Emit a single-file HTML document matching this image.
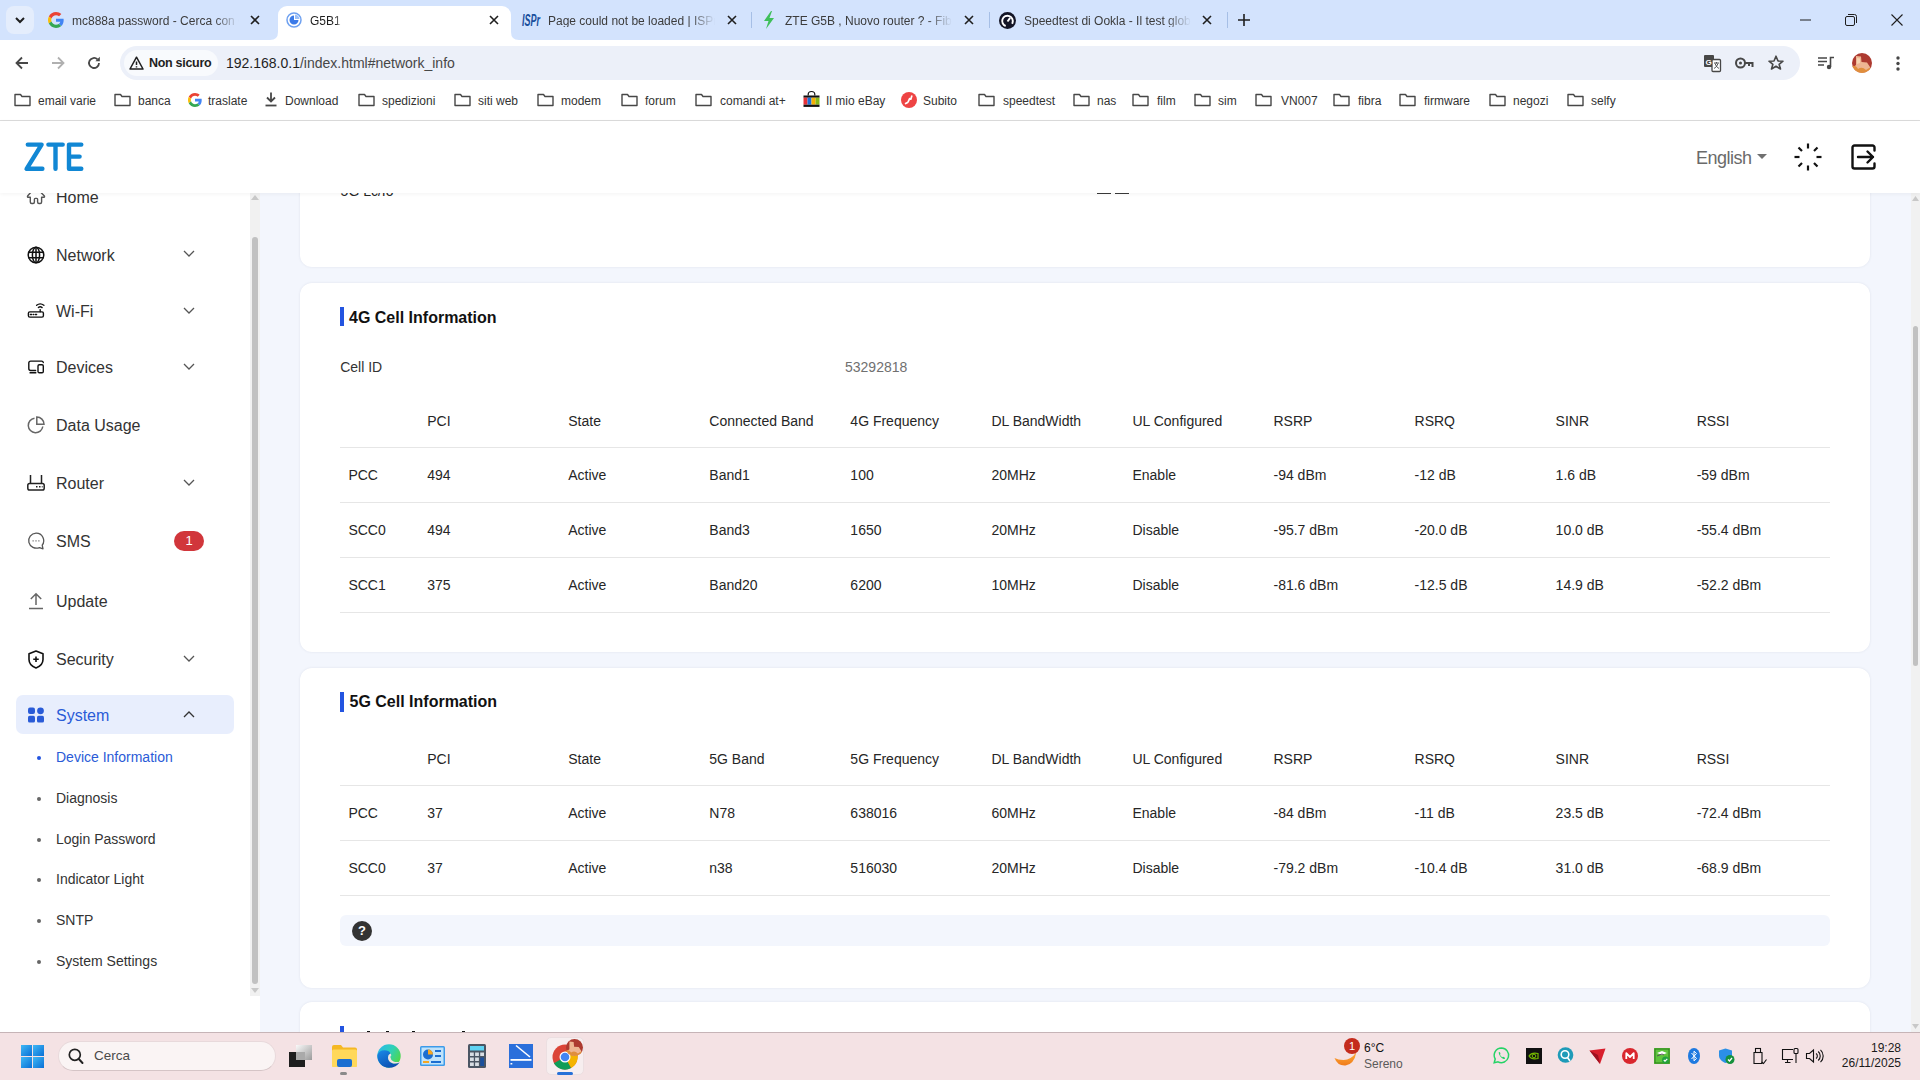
<!DOCTYPE html>
<html><head><meta charset="utf-8">
<style>
*{margin:0;padding:0;box-sizing:border-box}
html,body{width:1920px;height:1080px;overflow:hidden;font-family:"Liberation Sans",sans-serif;background:#fff;position:relative}
.a{position:absolute}
.t{position:absolute;white-space:nowrap;line-height:1}
svg{position:absolute;overflow:visible}
/* chrome */
#tabstrip{left:0;top:0;width:1920px;height:40px;background:#d3e3fd}
#toolbar{left:0;top:40px;width:1920px;height:44px;background:#fff;border-radius:8px 8px 0 0}
#bm{left:0;top:84px;width:1920px;height:36px;background:#fff}
#bmline{left:0;top:120px;width:1920px;height:1px;background:#dcdcdc}
.tabtxt{font-size:12px;color:#3c3c3c;top:15px;overflow:hidden;-webkit-mask-image:linear-gradient(90deg,#000 85%,transparent)}
.tabfade{position:absolute;top:8px;width:24px;height:24px;background:linear-gradient(90deg,rgba(211,227,253,0),#d3e3fd)}
.sep{position:absolute;top:12px;width:1px;height:16px;background:#a6bfe6}
.bmt{font-size:12px;color:#333;top:94.5px}
/* app */
#hdr{left:0;top:121px;width:1920px;height:72px;background:#fff;box-shadow:0 1px 4px rgba(0,0,0,0.05);z-index:5}
#side{left:0;top:193px;width:260px;height:839px;background:#fff}
#sscroll{left:250px;top:193px;width:10px;height:803px;background:#f1f1f1}
#content{left:260px;top:193px;width:1651px;height:839px;background:#f3f6fd;overflow:hidden}
#rscroll{left:1911px;top:193px;width:9px;height:839px;background:#f1f1f1}
.card{position:absolute;left:40px;width:1570px;background:#fff;border-radius:12px;box-shadow:0 0 2.5px rgba(40,50,90,0.10)}
.nav{font-size:16px;color:#333}
.sub{font-size:14px;color:#333}
.cell{font-size:14px;color:#262626}
.hline{position:absolute;left:80px;width:1490px;height:1px;background:#e6e6e6}
/* taskbar */
#task{left:0;top:1032px;width:1920px;height:48px;background:#f4e2e4;border-top:1px solid #c6b4b7}
</style></head><body>

<!-- ============ TAB STRIP ============ -->
<div id="tabstrip" class="a"></div>
<div class="a" style="left:6px;top:6px;width:28px;height:28px;border-radius:8px;background:#e4edfc"></div>
<svg style="left:14px;top:15px" width="12" height="10"><path d="M2 3 L6 7 L10 3" fill="none" stroke="#1f1f1f" stroke-width="2"/></svg>

<!-- tab1 -->
<svg style="left:48px;top:12px" width="16" height="16" viewBox="0 0 48 48"><path fill="#EA4335" d="M24 9.5c3.54 0 6.71 1.22 9.21 3.6l6.85-6.85C35.9 2.38 30.47 0 24 0 14.62 0 6.51 5.38 2.56 13.22l7.98 6.19C12.43 13.72 17.74 9.5 24 9.5z"/><path fill="#4285F4" d="M46.98 24.55c0-1.57-.15-3.09-.38-4.55H24v9.02h12.94c-.58 2.96-2.26 5.48-4.78 7.18l7.73 6c4.51-4.18 7.09-10.36 7.09-17.65z"/><path fill="#FBBC05" d="M10.53 28.59c-.48-1.45-.76-2.99-.76-4.59s.27-3.14.76-4.59l-7.98-6.19C.92 16.46 0 20.12 0 24c0 3.88.92 7.54 2.56 10.78l7.97-6.19z"/><path fill="#34A853" d="M24 48c6.48 0 11.93-2.13 15.89-5.81l-7.73-6c-2.15 1.45-4.92 2.3-8.16 2.3-6.26 0-11.57-4.22-13.47-9.91l-7.98 6.19C6.51 42.62 14.62 48 24 48z"/></svg>
<div class="t tabtxt" style="left:72px;width:167px">mc888a password - Cerca con G</div>
<svg style="left:250px;top:15px" width="10" height="10"><path d="M1 1L9 9M9 1L1 9" stroke="#1f1f1f" stroke-width="1.6"/></svg>

<!-- tab2 active -->
<div class="a" style="left:278px;top:6px;width:233px;height:34px;background:#fff;border-radius:9px 9px 0 0"></div>
<svg style="left:270px;top:32px" width="8" height="8"><path d="M0 8 Q8 8 8 0 L8 8 Z" fill="#fff"/></svg>
<svg style="left:511px;top:32px" width="8" height="8"><path d="M8 8 Q0 8 0 0 L0 8 Z" fill="#fff"/></svg>
<svg style="left:286px;top:12px" width="16" height="16" viewBox="0 0 16 16"><circle cx="8" cy="8" r="7" fill="none" stroke="#6fa1f0" stroke-width="1.5"/><path d="M8 3.5 A4.5 4.5 0 1 0 12.5 8 L8 8 Z" fill="#3b7ae8"/><path d="M9 2.5 A5.5 5.5 0 0 1 13.5 7 L9 7 Z" fill="#9cc0f7"/></svg>
<div class="t tabtxt" style="left:310px;color:#1f1f1f">G5B1</div>
<svg style="left:489px;top:15px" width="10" height="10"><path d="M1 1L9 9M9 1L1 9" stroke="#1f1f1f" stroke-width="1.6"/></svg>

<!-- tab3 -->
<svg style="left:522px;top:11px" width="19" height="18" viewBox="0 0 19 18"><text x="0" y="15" font-family="Liberation Sans" font-style="italic" font-weight="bold" font-size="16" fill="#1a4f9c" textLength="18" lengthAdjust="spacingAndGlyphs">ISPr</text></svg>
<div class="t tabtxt" style="left:548px;width:167px">Page could not be loaded | ISPr</div>
<svg style="left:727px;top:15px" width="10" height="10"><path d="M1 1L9 9M9 1L1 9" stroke="#1f1f1f" stroke-width="1.6"/></svg>
<div class="sep" style="left:751px"></div>

<!-- tab4 -->
<svg style="left:762px;top:11px" width="14" height="18" viewBox="0 0 14 18"><path d="M9 0 L2 10 L6.5 10 L4 18 L12 7 L7.5 7 L10 0 Z" fill="#3fbf5a"/></svg>
<div class="t tabtxt" style="left:785px;width:167px">ZTE G5B , Nuovo router ? - Fibra</div>
<svg style="left:964px;top:15px" width="10" height="10"><path d="M1 1L9 9M9 1L1 9" stroke="#1f1f1f" stroke-width="1.6"/></svg>
<div class="sep" style="left:989px"></div>

<!-- tab5 -->
<svg style="left:999px;top:12px" width="17" height="17" viewBox="0 0 16 16"><circle cx="8" cy="8" r="8" fill="#141526"/><circle cx="8" cy="8.5" r="5" fill="none" stroke="#fff" stroke-width="1.8" stroke-dasharray="24 8" transform="rotate(110 8 8.5)"/><path d="M8 9 L10.5 5.5" stroke="#fff" stroke-width="1.8"/></svg>
<div class="t tabtxt" style="left:1024px;width:167px">Speedtest di Ookla - Il test globale</div>
<svg style="left:1202px;top:15px" width="10" height="10"><path d="M1 1L9 9M9 1L1 9" stroke="#1f1f1f" stroke-width="1.6"/></svg>
<div class="sep" style="left:1227px"></div>
<svg style="left:1238px;top:14px" width="12" height="12"><path d="M6 0V12M0 6H12" stroke="#1f1f1f" stroke-width="1.6"/></svg>

<!-- window controls -->
<svg style="left:1800px;top:19px" width="11" height="2"><path d="M0 1H11" stroke="#1f1f1f" stroke-width="1"/></svg>
<svg style="left:1845px;top:14px" width="12" height="12"><rect x="0.5" y="2.5" width="9" height="9" rx="1.5" fill="none" stroke="#1f1f1f"/><path d="M3 0.5H9.5A2 2 0 0 1 11.5 2.5V9" fill="none" stroke="#1f1f1f"/></svg>
<svg style="left:1891px;top:14px" width="12" height="12"><path d="M0.5 0.5L11.5 11.5M11.5 0.5L0.5 11.5" stroke="#1f1f1f" stroke-width="1.1"/></svg>

<!-- ============ TOOLBAR ============ -->
<div id="toolbar" class="a"></div>
<svg style="left:15px;top:56px" width="14" height="14" viewBox="0 0 14 14"><path d="M13 7H2M7 1.5L1.5 7L7 12.5" fill="none" stroke="#474747" stroke-width="1.8"/></svg>
<svg style="left:51px;top:56px" width="14" height="14" viewBox="0 0 14 14"><path d="M1 7H12M7 1.5L12.5 7L7 12.5" fill="none" stroke="#b0b0b0" stroke-width="1.8"/></svg>
<svg style="left:87px;top:56px" width="14" height="14" viewBox="0 0 14 14"><path d="M12 7A5 5 0 1 1 10.5 3.4" fill="none" stroke="#474747" stroke-width="1.8"/><path d="M12.8 0.8V5.2H8.4Z" fill="#474747"/></svg>
<div class="a" style="left:120px;top:46px;width:1680px;height:34px;border-radius:17px;background:#ecf0f9"></div>
<div class="a" style="left:124px;top:50px;width:94px;height:26px;border-radius:13px;background:#f8fafd"></div>
<svg style="left:129px;top:56px" width="15" height="14" viewBox="0 0 15 14"><path d="M7.5 1.2L14 13H1Z" fill="none" stroke="#1f1f1f" stroke-width="1.5" stroke-linejoin="round"/><path d="M7.5 5.5V9M7.5 10.3V11.5" stroke="#1f1f1f" stroke-width="1.5"/></svg>
<div class="t" style="left:149px;top:57px;font-size:12.5px;font-weight:bold;color:#1f1f1f;letter-spacing:-0.3px">Non sicuro</div>
<div class="t" style="left:226px;top:56px;font-size:14px;color:#1f1f1f">192.168.0.1<span style="color:#474747">/index.html#network_info</span></div>
<!-- right icons -->
<svg style="left:1704px;top:55px" width="17" height="17" viewBox="0 0 17 17"><rect x="0" y="0" width="10" height="12" rx="1" fill="#474747"/><rect x="8" y="4.5" width="8.5" height="12" rx="1" fill="#fff" stroke="#474747" stroke-width="1.3"/><text x="1.5" y="9.5" font-size="8" font-weight="bold" fill="#fff" font-family="Liberation Sans">G</text><path d="M10 8H15M12.5 7V8.5M11 8.5Q12 12 15 13.5M14 8.5Q13 12 10 13.5" fill="none" stroke="#474747" stroke-width="0.9"/></svg>
<svg style="left:1735px;top:57px" width="19" height="12" viewBox="0 0 19 12"><circle cx="5.5" cy="6" r="4.5" fill="none" stroke="#474747" stroke-width="2"/><circle cx="5.5" cy="6" r="1.5" fill="#474747"/><path d="M10 6H17.5V10M14 6V9" fill="none" stroke="#474747" stroke-width="2"/></svg>
<svg style="left:1768px;top:55px" width="16" height="15" viewBox="0 0 16 15"><path d="M8 1.2L10 6L15 6.2L11.1 9.3L12.5 14L8 11.3L3.5 14L4.9 9.3L1 6.2L6 6Z" fill="none" stroke="#474747" stroke-width="1.6" stroke-linejoin="round"/></svg>
<svg style="left:1818px;top:56px" width="17" height="14" viewBox="0 0 17 14"><path d="M0 2H9M0 5.5H9M0 9H6" stroke="#474747" stroke-width="1.6"/><path d="M12.5 11V1.5H16" fill="none" stroke="#474747" stroke-width="1.6"/><circle cx="11" cy="11" r="2.2" fill="#474747"/></svg>
<svg style="left:1852px;top:53px" width="20" height="20" viewBox="0 0 20 20"><defs><clipPath id="av"><circle cx="10" cy="10" r="10"/></clipPath></defs><g clip-path="url(#av)"><rect width="20" height="20" fill="#ad3a30"/><path d="M4 3L9 3.5L9.5 9L15 9.5L18 14L17 20H3L1.5 14L4 12Z" fill="#eeb592"/><path d="M0 13Q4 12 6 16Q10 13 14 17Q18 14 20 15V20H0Z" fill="#e08e3c"/><path d="M5 5L8 5.5L8 10L5 11Z" fill="#f6d4b0"/></g></svg>
<svg style="left:1896px;top:56px" width="4" height="15"><circle cx="2" cy="2" r="1.7" fill="#474747"/><circle cx="2" cy="7.5" r="1.7" fill="#474747"/><circle cx="2" cy="13" r="1.7" fill="#474747"/></svg>

<!-- ============ BOOKMARKS ============ -->
<div id="bm" class="a"></div>
<div id="bmline" class="a"></div>
<svg style="left:14px;top:93px" width="17" height="14" viewBox="0 0 17 14"><path d="M1 1.5V12.5H16V3.5H8L6.5 1.5Z" fill="none" stroke="#474747" stroke-width="1.4" stroke-linejoin="round"/></svg>
<div class="t bmt" style="left:38px">email varie</div>
<svg style="left:114px;top:93px" width="17" height="14" viewBox="0 0 17 14"><path d="M1 1.5V12.5H16V3.5H8L6.5 1.5Z" fill="none" stroke="#474747" stroke-width="1.4" stroke-linejoin="round"/></svg>
<div class="t bmt" style="left:138px">banca</div>
<svg style="left:188px;top:93px" width="14" height="14" viewBox="0 0 48 48"><path fill="#EA4335" d="M24 9.5c3.54 0 6.71 1.22 9.21 3.6l6.85-6.850C35.9 2.38 30.47 0 24 0 14.62 0 6.51 5.38 2.56 13.22l7.98 6.19C12.43 13.72 17.74 9.5 24 9.5z"/><path fill="#4285F4" d="M46.98 24.55c0-1.57-.15-3.09-.38-4.55H24v9.02h12.94c-.58 2.96-2.26 5.480-4.78 7.18l7.73 6c4.51-4.18 7.09-10.36 7.09-17.65z"/><path fill="#FBBC05" d="M10.53 28.59c-.48-1.45-.76-2.99-.76-4.59s.27-3.14.76-4.59l-7.98-6.19C.92 16.46 0 20.12 0 24c0 3.88.92 7.54 2.56 10.78l7.97-6.19z"/><path fill="#34A853" d="M24 48c6.48 0 11.93-2.13 15.89-5.81l-7.73-6c-2.15 1.45-4.92 2.3-8.16 2.3-6.26 0-11.57-4.22-13.47-9.91l-7.98 6.19C6.51 42.62 14.62 48 24 48z"/></svg>
<div class="t bmt" style="left:208px">traslate</div>
<svg style="left:265px;top:92px" width="12" height="15" viewBox="0 0 12 15"><path d="M6 0.5V9M2 5.5L6 9.5L10 5.5" fill="none" stroke="#474747" stroke-width="1.8"/><path d="M0.5 13.5H11.5" stroke="#474747" stroke-width="1.8"/></svg>
<div class="t bmt" style="left:285px">Download</div>
<svg style="left:358px;top:93px" width="17" height="14" viewBox="0 0 17 14"><path d="M1 1.5V12.5H16V3.5H8L6.5 1.5Z" fill="none" stroke="#474747" stroke-width="1.4" stroke-linejoin="round"/></svg>
<div class="t bmt" style="left:382px">spedizioni</div>
<svg style="left:454px;top:93px" width="17" height="14" viewBox="0 0 17 14"><path d="M1 1.5V12.5H16V3.5H8L6.5 1.5Z" fill="none" stroke="#474747" stroke-width="1.4" stroke-linejoin="round"/></svg>
<div class="t bmt" style="left:478px">siti web</div>
<svg style="left:537px;top:93px" width="17" height="14" viewBox="0 0 17 14"><path d="M1 1.5V12.5H16V3.5H8L6.5 1.5Z" fill="none" stroke="#474747" stroke-width="1.4" stroke-linejoin="round"/></svg>
<div class="t bmt" style="left:561px">modem</div>
<svg style="left:621px;top:93px" width="17" height="14" viewBox="0 0 17 14"><path d="M1 1.5V12.5H16V3.5H8L6.5 1.5Z" fill="none" stroke="#474747" stroke-width="1.4" stroke-linejoin="round"/></svg>
<div class="t bmt" style="left:645px">forum</div>
<svg style="left:695px;top:93px" width="17" height="14" viewBox="0 0 17 14"><path d="M1 1.5V12.5H16V3.5H8L6.5 1.5Z" fill="none" stroke="#474747" stroke-width="1.4" stroke-linejoin="round"/></svg>
<div class="t bmt" style="left:720px">comandi at+</div>
<svg style="left:803px;top:91px" width="17" height="17" viewBox="0 0 17 17"><path d="M5.2 4.5V3.5A3.3 3 0 0 1 11.8 3.5V4.5" fill="none" stroke="#111" stroke-width="1.2"/><rect x="0.5" y="4.5" width="16" height="2.2" fill="#111"/><rect x="0.5" y="6.7" width="4" height="7" fill="#e53238"/><rect x="4.5" y="6.7" width="4" height="7" fill="#1d6fd8"/><rect x="8.5" y="6.7" width="4" height="7" fill="#f5af02"/><rect x="12.5" y="6.7" width="4" height="7" fill="#86b817"/><rect x="0.5" y="13.7" width="16" height="2.2" fill="#111"/></svg>
<div class="t bmt" style="left:826px">Il mio eBay</div>
<svg style="left:901px;top:92px" width="16" height="16" viewBox="0 0 16 16"><circle cx="8" cy="8" r="8" fill="#ee4444"/><path d="M4.6 11.6L6.6 10.4M7.2 9.6L8.6 6.6M9.8 7.2L10.8 4" stroke="#fff" stroke-width="1.7" stroke-linecap="round"/></svg>
<div class="t bmt" style="left:923px">Subito</div>
<svg style="left:978px;top:93px" width="17" height="14" viewBox="0 0 17 14"><path d="M1 1.5V12.5H16V3.5H8L6.5 1.5Z" fill="none" stroke="#474747" stroke-width="1.4" stroke-linejoin="round"/></svg>
<div class="t bmt" style="left:1003px">speedtest</div>
<svg style="left:1073px;top:93px" width="17" height="14" viewBox="0 0 17 14"><path d="M1 1.5V12.5H16V3.5H8L6.5 1.5Z" fill="none" stroke="#474747" stroke-width="1.4" stroke-linejoin="round"/></svg>
<div class="t bmt" style="left:1097px">nas</div>
<svg style="left:1132px;top:93px" width="17" height="14" viewBox="0 0 17 14"><path d="M1 1.5V12.5H16V3.5H8L6.5 1.5Z" fill="none" stroke="#474747" stroke-width="1.4" stroke-linejoin="round"/></svg>
<div class="t bmt" style="left:1157px">film</div>
<svg style="left:1194px;top:93px" width="17" height="14" viewBox="0 0 17 14"><path d="M1 1.5V12.5H16V3.5H8L6.5 1.5Z" fill="none" stroke="#474747" stroke-width="1.4" stroke-linejoin="round"/></svg>
<div class="t bmt" style="left:1218px">sim</div>
<svg style="left:1255px;top:93px" width="17" height="14" viewBox="0 0 17 14"><path d="M1 1.5V12.5H16V3.5H8L6.5 1.5Z" fill="none" stroke="#474747" stroke-width="1.4" stroke-linejoin="round"/></svg>
<div class="t bmt" style="left:1281px">VN007</div>
<svg style="left:1333px;top:93px" width="17" height="14" viewBox="0 0 17 14"><path d="M1 1.5V12.5H16V3.5H8L6.5 1.5Z" fill="none" stroke="#474747" stroke-width="1.4" stroke-linejoin="round"/></svg>
<div class="t bmt" style="left:1358px">fibra</div>
<svg style="left:1399px;top:93px" width="17" height="14" viewBox="0 0 17 14"><path d="M1 1.5V12.5H16V3.5H8L6.5 1.5Z" fill="none" stroke="#474747" stroke-width="1.4" stroke-linejoin="round"/></svg>
<div class="t bmt" style="left:1424px">firmware</div>
<svg style="left:1489px;top:93px" width="17" height="14" viewBox="0 0 17 14"><path d="M1 1.5V12.5H16V3.5H8L6.5 1.5Z" fill="none" stroke="#474747" stroke-width="1.4" stroke-linejoin="round"/></svg>
<div class="t bmt" style="left:1513px">negozi</div>
<svg style="left:1567px;top:93px" width="17" height="14" viewBox="0 0 17 14"><path d="M1 1.5V12.5H16V3.5H8L6.5 1.5Z" fill="none" stroke="#474747" stroke-width="1.4" stroke-linejoin="round"/></svg>
<div class="t bmt" style="left:1591px">selfy</div>
<!-- ============ APP HEADER ============ -->
<div id="hdr" class="a"></div>
<svg style="left:20px;top:138px;z-index:6" width="70" height="38" viewBox="20 138 70 38"><g fill="none" stroke="#1187d4" stroke-width="4.4" stroke-linecap="round" stroke-linejoin="round"><path d="M27.8 144.6H41.6L26.6 168.8H42.4"/><path d="M48.4 144.6H62.7M55.5 144.6V168.8"/><path d="M81.3 144.6H69V168.8H81.3M69 156.6H79.6"/></g></svg>
<div class="t" style="left:1696px;top:149px;z-index:6;font-size:18px;color:#6a6a6a;letter-spacing:-0.5px">English</div>
<svg style="left:1757px;top:154px;z-index:6" width="10" height="5"><path d="M0 0H10L5 5Z" fill="#707070"/></svg>
<svg style="left:1794px;top:143px;z-index:6" width="28" height="28" viewBox="-14 -14 28 28"><g stroke="#111" stroke-width="2.2" stroke-linecap="butt">
<path d="M0 -13.5V-8.5"/><path d="M0 13.5V8.5"/><path d="M-13.5 0H-8.5"/><path d="M13.5 0H8.5"/>
<path d="M-9.5 -9.5L-6 -6"/><path d="M9.5 -9.5L6 -6"/><path d="M-9.5 9.5L-6 6"/><path d="M9.5 9.5L6 6"/></g></svg>
<svg style="left:1851px;top:144px;z-index:6" width="26" height="26" viewBox="0 0 26 26"><path d="M23.5 6.5V3.5A2 2 0 0 0 21.5 1.5H3.5A2 2 0 0 0 1.5 3.5V22.5A2 2 0 0 0 3.5 24.5H21.5A2 2 0 0 0 23.5 22.5V19.5" fill="none" stroke="#111" stroke-width="2.4" stroke-linecap="round"/><path d="M7 13H22M16.5 7.5L22 13L16.5 18.5" fill="none" stroke="#111" stroke-width="2.4" stroke-linecap="round" stroke-linejoin="round"/></svg>

<!-- ============ SIDEBAR ============ -->
<div id="side" class="a"></div>
<div id="sscroll" class="a"></div>
<svg style="left:251px;top:195px" width="8" height="5"><path d="M0 5H8L4 0Z" fill="#c8c8c8"/></svg>
<div class="a" style="left:252px;top:237px;width:6px;height:747px;border-radius:3px;background:#c1c1c1"></div>
<svg style="left:251px;top:988px" width="8" height="5"><path d="M0 0H8L4 5Z" fill="#c8c8c8"/></svg>

<!-- sidebar items -->
<svg style="left:22px;top:186px" width="26" height="20" viewBox="22 186 26 20"><path d="M31.5 191.5L27.6 196Q27 197.3 28.6 197.3H30.3V202Q30.3 203.5 31.8 203.5H33Q34.4 203.5 34.4 202V199.2Q34.4 198.4 35.2 198.4H36.8Q37.6 198.4 37.6 199.2V202Q37.6 203.5 39 203.5H40.2Q41.6 203.5 41.6 202V197.3H43.3Q45 197.3 44.4 196L40 191.5" fill="none" stroke="#555" stroke-width="1.4" stroke-linejoin="round"/></svg>
<div class="t nav" style="left:56px;top:189.96px">Home</div>
<svg style="left:27px;top:246px" width="18" height="18" viewBox="0 0 18 18"><g fill="none" stroke="#111" stroke-width="1.5"><circle cx="9" cy="9" r="7.8"/><ellipse cx="9" cy="9" rx="3.6" ry="7.8"/><path d="M9 1.2V16.8M1.5 6.3H16.5M1.5 11.7H16.5"/></g></svg>
<div class="t nav" style="left:56px;top:247.66px">Network</div>
<svg style="left:183px;top:250px" width="12" height="7" viewBox="0 0 12 7"><path d="M1 1L6 6L11 1" fill="none" stroke="#555" stroke-width="1.3"/></svg>
<svg style="left:24px;top:298px" width="24" height="24" viewBox="24 298 24 24"><g fill="none" stroke="#111" stroke-width="1.4" stroke-linecap="round"><rect x="28.4" y="311.9" width="15" height="5.2" rx="1.4"/><path d="M40.2 309.6V311.8"/><path d="M38.4 307.6Q40.2 306 42.1 307.6"/><path d="M36.6 305.3Q40.2 302.4 43.9 305.3"/></g><path d="M30.4 314.5H31.6M33.3 314.5H33.6M35.3 314.5H36.6" stroke="#111" stroke-width="1.4" stroke-linecap="round"/></svg>
<div class="t nav" style="left:56px;top:303.96px">Wi-Fi</div>
<svg style="left:183px;top:307px" width="12" height="7" viewBox="0 0 12 7"><path d="M1 1L6 6L11 1" fill="none" stroke="#555" stroke-width="1.3"/></svg>
<svg style="left:24px;top:354px" width="24" height="24" viewBox="24 354 24 24"><g fill="none" stroke="#111" stroke-width="1.4" stroke-linecap="round"><path d="M35.6 370.4H30.8A2 2 0 0 1 28.8 368.4V363.1A2 2 0 0 1 30.8 361.1H41.6A1.7 1.7 0 0 1 43.3 362.5"/><rect x="38" y="364.7" width="5.3" height="8" rx="1.3"/></g><path d="M30.3 372.7H35.6" stroke="#111" stroke-width="1.7" stroke-linecap="round"/></svg>
<div class="t nav" style="left:56px;top:360.16px">Devices</div>
<svg style="left:183px;top:363px" width="12" height="7" viewBox="0 0 12 7"><path d="M1 1L6 6L11 1" fill="none" stroke="#555" stroke-width="1.3"/></svg>
<svg style="left:27px;top:416px" width="18" height="18" viewBox="0 0 18 18"><g fill="none" stroke="#666" stroke-width="1.5"><path d="M7.5 2.2A7.3 7.3 0 1 0 15.8 10.5"/><path d="M9.8 1V8.2H17A7.2 7.2 0 0 0 9.8 1Z"/></g></svg>
<div class="t nav" style="left:56px;top:418.26px">Data Usage</div>
<svg style="left:27px;top:474px" width="18" height="17" viewBox="0 0 18 17"><g fill="none" stroke="#222" stroke-width="1.5"><rect x="0.8" y="9.5" width="16.4" height="6.5" rx="1.8"/><path d="M3.5 1V9.5M14.5 1V9.5"/></g><path d="M9 12.8H10.5M12 12.8H13.5M14.8 12.8H15.6" stroke="#222" stroke-width="1.4"/></svg>
<div class="t nav" style="left:56px;top:476.26px">Router</div>
<svg style="left:183px;top:479px" width="12" height="7" viewBox="0 0 12 7"><path d="M1 1L6 6L11 1" fill="none" stroke="#555" stroke-width="1.3"/></svg>
<svg style="left:27px;top:532px" width="18" height="18" viewBox="0 0 18 18"><path d="M9 1.2A7.8 7.5 0 1 0 12.5 15.6L16 16.8L15.2 13.2A7.5 7.5 0 0 0 9 1.2Z" fill="none" stroke="#555" stroke-width="1.3" stroke-linejoin="round"/><path d="M5.6 8.8H6.6M8.5 8.8H9.5M11.4 8.8H12.4" stroke="#555" stroke-width="1.3"/></svg>
<div class="t nav" style="left:56px;top:533.96px">SMS</div>
<svg style="left:27px;top:592px" width="18" height="18" viewBox="0 0 18 18"><g fill="none" stroke="#666" stroke-width="1.5"><path d="M9 2V13M3.8 7L9 1.8L14.2 7"/><path d="M2 16.5H16"/></g></svg>
<div class="t nav" style="left:56px;top:593.96px">Update</div>
<svg style="left:27px;top:650px" width="18" height="19" viewBox="0 0 18 19"><path d="M9 1L16 3.8V9.5C16 13.5 13 16.5 9 18C5 16.5 2 13.5 2 9.5V3.8Z" fill="none" stroke="#111" stroke-width="1.6" stroke-linejoin="round"/><path d="M9 6.5V12M6.25 9.25H11.75" stroke="#111" stroke-width="1.6"/></svg>
<div class="t nav" style="left:56px;top:652.06px">Security</div>
<svg style="left:183px;top:655px" width="12" height="7" viewBox="0 0 12 7"><path d="M1 1L6 6L11 1" fill="none" stroke="#555" stroke-width="1.3"/></svg>
<div class="a" style="left:174px;top:531px;width:30px;height:20px;border-radius:10px;background:#d1363b"></div>
<div class="t" style="left:174px;top:534px;width:30px;text-align:center;font-size:13px;color:#fff">1</div>
<div class="a" style="left:16px;top:695px;width:218px;height:39px;border-radius:7px;background:#e8eefd"></div>
<svg style="left:27px;top:707px" width="18" height="16" viewBox="0 0 18 16"><g fill="#2a5bd7"><rect x="1" y="0.5" width="7" height="6.5" rx="2"/><circle cx="13.5" cy="3.8" r="3.4"/><rect x="1" y="8.8" width="7" height="6.7" rx="1.6"/><rect x="10" y="8.8" width="7" height="6.7" rx="1.6"/></g></svg>
<div class="t nav" style="left:56px;top:707.96px;color:#2a5bd7">System</div>
<svg style="left:183px;top:711px" width="12" height="7" viewBox="0 0 12 7"><path d="M1 6L6 1L11 6" fill="none" stroke="#333" stroke-width="1.3"/></svg>
<div class="a" style="left:36.5px;top:756px;width:4px;height:4px;border-radius:50%;background:#2354e0"></div>
<div class="t sub" style="left:56px;top:749.75px;color:#2a5bd7">Device Information</div>
<div class="a" style="left:36.5px;top:797px;width:4px;height:4px;border-radius:50%;background:#666"></div>
<div class="t sub" style="left:56px;top:791.25px;color:#333">Diagnosis</div>
<div class="a" style="left:36.5px;top:838px;width:4px;height:4px;border-radius:50%;background:#666"></div>
<div class="t sub" style="left:56px;top:832.05px;color:#333">Login Password</div>
<div class="a" style="left:36.5px;top:878px;width:4px;height:4px;border-radius:50%;background:#666"></div>
<div class="t sub" style="left:56px;top:872.15px;color:#333">Indicator Light</div>
<div class="a" style="left:36.5px;top:919px;width:4px;height:4px;border-radius:50%;background:#666"></div>
<div class="t sub" style="left:56px;top:912.95px;color:#333">SNTP</div>
<div class="a" style="left:36.5px;top:960px;width:4px;height:4px;border-radius:50%;background:#666"></div>
<div class="t sub" style="left:56px;top:953.85px;color:#333">System Settings</div>
<!-- ============ CONTENT ============ -->
<div id="content" class="a">
<div class="card" style="top:-133px;height:207px"></div>
<div class="t" style="left:80.6px;top:-8.65px;font-size:14px;color:#262626;">5G Lc/Io</div>
<div class="a" style="left:837px;top:0px;width:14px;height:1px;background:#3a3a3a"></div>
<div class="a" style="left:855px;top:0px;width:14px;height:1px;background:#3a3a3a"></div>
<div class="card" style="top:90px;height:369px"></div>
<div class="a" style="left:80px;top:114px;width:4px;height:19px;background:#2354e0"></div>
<div class="t" style="left:89px;top:116.96px;font-size:16px;color:#111;font-weight:bold;">4G Cell Information</div>
<div class="t" style="left:80.2px;top:167.15px;font-size:14px;color:#333;">Cell ID</div>
<div class="t" style="left:585px;top:167.15px;font-size:14px;color:#707070;">53292818</div>
<div class="t" style="left:167.2px;top:221.15px;font-size:14px;color:#262626;">PCI</div>
<div class="t" style="left:308.25px;top:221.15px;font-size:14px;color:#262626;">State</div>
<div class="t" style="left:449.3px;top:221.15px;font-size:14px;color:#262626;">Connected Band</div>
<div class="t" style="left:590.35px;top:221.15px;font-size:14px;color:#262626;">4G Frequency</div>
<div class="t" style="left:731.4px;top:221.15px;font-size:14px;color:#262626;">DL BandWidth</div>
<div class="t" style="left:872.45px;top:221.15px;font-size:14px;color:#262626;">UL Configured</div>
<div class="t" style="left:1013.5px;top:221.15px;font-size:14px;color:#262626;">RSRP</div>
<div class="t" style="left:1154.55px;top:221.15px;font-size:14px;color:#262626;">RSRQ</div>
<div class="t" style="left:1295.6px;top:221.15px;font-size:14px;color:#262626;">SINR</div>
<div class="t" style="left:1436.65px;top:221.15px;font-size:14px;color:#262626;">RSSI</div>
<div class="hline" style="top:254px"></div>
<div class="t" style="left:88.4px;top:274.95px;font-size:14px;color:#262626;">PCC</div>
<div class="t" style="left:167.2px;top:274.95px;font-size:14px;color:#262626;">494</div>
<div class="t" style="left:308.25px;top:274.95px;font-size:14px;color:#262626;">Active</div>
<div class="t" style="left:449.3px;top:274.95px;font-size:14px;color:#262626;">Band1</div>
<div class="t" style="left:590.35px;top:274.95px;font-size:14px;color:#262626;">100</div>
<div class="t" style="left:731.4px;top:274.95px;font-size:14px;color:#262626;">20MHz</div>
<div class="t" style="left:872.45px;top:274.95px;font-size:14px;color:#262626;">Enable</div>
<div class="t" style="left:1013.5px;top:274.95px;font-size:14px;color:#262626;">-94 dBm</div>
<div class="t" style="left:1154.55px;top:274.95px;font-size:14px;color:#262626;">-12 dB</div>
<div class="t" style="left:1295.6px;top:274.95px;font-size:14px;color:#262626;">1.6 dB</div>
<div class="t" style="left:1436.65px;top:274.95px;font-size:14px;color:#262626;">-59 dBm</div>
<div class="hline" style="top:309px"></div>
<div class="t" style="left:88.4px;top:329.75px;font-size:14px;color:#262626;">SCC0</div>
<div class="t" style="left:167.2px;top:329.75px;font-size:14px;color:#262626;">494</div>
<div class="t" style="left:308.25px;top:329.75px;font-size:14px;color:#262626;">Active</div>
<div class="t" style="left:449.3px;top:329.75px;font-size:14px;color:#262626;">Band3</div>
<div class="t" style="left:590.35px;top:329.75px;font-size:14px;color:#262626;">1650</div>
<div class="t" style="left:731.4px;top:329.75px;font-size:14px;color:#262626;">20MHz</div>
<div class="t" style="left:872.45px;top:329.75px;font-size:14px;color:#262626;">Disable</div>
<div class="t" style="left:1013.5px;top:329.75px;font-size:14px;color:#262626;">-95.7 dBm</div>
<div class="t" style="left:1154.55px;top:329.75px;font-size:14px;color:#262626;">-20.0 dB</div>
<div class="t" style="left:1295.6px;top:329.75px;font-size:14px;color:#262626;">10.0 dB</div>
<div class="t" style="left:1436.65px;top:329.75px;font-size:14px;color:#262626;">-55.4 dBm</div>
<div class="hline" style="top:364px"></div>
<div class="t" style="left:88.4px;top:384.55px;font-size:14px;color:#262626;">SCC1</div>
<div class="t" style="left:167.2px;top:384.55px;font-size:14px;color:#262626;">375</div>
<div class="t" style="left:308.25px;top:384.55px;font-size:14px;color:#262626;">Active</div>
<div class="t" style="left:449.3px;top:384.55px;font-size:14px;color:#262626;">Band20</div>
<div class="t" style="left:590.35px;top:384.55px;font-size:14px;color:#262626;">6200</div>
<div class="t" style="left:731.4px;top:384.55px;font-size:14px;color:#262626;">10MHz</div>
<div class="t" style="left:872.45px;top:384.55px;font-size:14px;color:#262626;">Disable</div>
<div class="t" style="left:1013.5px;top:384.55px;font-size:14px;color:#262626;">-81.6 dBm</div>
<div class="t" style="left:1154.55px;top:384.55px;font-size:14px;color:#262626;">-12.5 dB</div>
<div class="t" style="left:1295.6px;top:384.55px;font-size:14px;color:#262626;">14.9 dB</div>
<div class="t" style="left:1436.65px;top:384.55px;font-size:14px;color:#262626;">-52.2 dBm</div>
<div class="hline" style="top:419px"></div>
<div class="card" style="top:475px;height:320px"></div>
<div class="a" style="left:80px;top:499px;width:4px;height:20px;background:#2354e0"></div>
<div class="t" style="left:89.5px;top:501.26px;font-size:16px;color:#111;font-weight:bold;">5G Cell Information</div>
<div class="t" style="left:167.2px;top:559.45px;font-size:14px;color:#262626;">PCI</div>
<div class="t" style="left:308.25px;top:559.45px;font-size:14px;color:#262626;">State</div>
<div class="t" style="left:449.3px;top:559.45px;font-size:14px;color:#262626;">5G Band</div>
<div class="t" style="left:590.35px;top:559.45px;font-size:14px;color:#262626;">5G Frequency</div>
<div class="t" style="left:731.4px;top:559.45px;font-size:14px;color:#262626;">DL BandWidth</div>
<div class="t" style="left:872.45px;top:559.45px;font-size:14px;color:#262626;">UL Configured</div>
<div class="t" style="left:1013.5px;top:559.45px;font-size:14px;color:#262626;">RSRP</div>
<div class="t" style="left:1154.55px;top:559.45px;font-size:14px;color:#262626;">RSRQ</div>
<div class="t" style="left:1295.6px;top:559.45px;font-size:14px;color:#262626;">SINR</div>
<div class="t" style="left:1436.65px;top:559.45px;font-size:14px;color:#262626;">RSSI</div>
<div class="hline" style="top:592px"></div>
<div class="t" style="left:88.4px;top:613.45px;font-size:14px;color:#262626;">PCC</div>
<div class="t" style="left:167.2px;top:613.45px;font-size:14px;color:#262626;">37</div>
<div class="t" style="left:308.25px;top:613.45px;font-size:14px;color:#262626;">Active</div>
<div class="t" style="left:449.3px;top:613.45px;font-size:14px;color:#262626;">N78</div>
<div class="t" style="left:590.35px;top:613.45px;font-size:14px;color:#262626;">638016</div>
<div class="t" style="left:731.4px;top:613.45px;font-size:14px;color:#262626;">60MHz</div>
<div class="t" style="left:872.45px;top:613.45px;font-size:14px;color:#262626;">Enable</div>
<div class="t" style="left:1013.5px;top:613.45px;font-size:14px;color:#262626;">-84 dBm</div>
<div class="t" style="left:1154.55px;top:613.45px;font-size:14px;color:#262626;">-11 dB</div>
<div class="t" style="left:1295.6px;top:613.45px;font-size:14px;color:#262626;">23.5 dB</div>
<div class="t" style="left:1436.65px;top:613.45px;font-size:14px;color:#262626;">-72.4 dBm</div>
<div class="hline" style="top:647px"></div>
<div class="t" style="left:88.4px;top:668.45px;font-size:14px;color:#262626;">SCC0</div>
<div class="t" style="left:167.2px;top:668.45px;font-size:14px;color:#262626;">37</div>
<div class="t" style="left:308.25px;top:668.45px;font-size:14px;color:#262626;">Active</div>
<div class="t" style="left:449.3px;top:668.45px;font-size:14px;color:#262626;">n38</div>
<div class="t" style="left:590.35px;top:668.45px;font-size:14px;color:#262626;">516030</div>
<div class="t" style="left:731.4px;top:668.45px;font-size:14px;color:#262626;">20MHz</div>
<div class="t" style="left:872.45px;top:668.45px;font-size:14px;color:#262626;">Disable</div>
<div class="t" style="left:1013.5px;top:668.45px;font-size:14px;color:#262626;">-79.2 dBm</div>
<div class="t" style="left:1154.55px;top:668.45px;font-size:14px;color:#262626;">-10.4 dB</div>
<div class="t" style="left:1295.6px;top:668.45px;font-size:14px;color:#262626;">31.0 dB</div>
<div class="t" style="left:1436.65px;top:668.45px;font-size:14px;color:#262626;">-68.9 dBm</div>
<div class="hline" style="top:702px"></div>
<div class="a" style="left:80px;top:722px;width:1490px;height:31px;border-radius:6px;background:#f3f6fd"></div>
<div class="a" style="left:92px;top:728px;width:20px;height:20px;border-radius:50%;background:#333"></div>
<div class="t" style="left:92px;top:731px;width:20px;text-align:center;font-size:13px;font-weight:bold;color:#fff">?</div>
<div class="card" style="top:809px;height:400px"></div>
<div class="a" style="left:80px;top:833px;width:4px;height:20px;background:#2354e0"></div>
<div class="a" style="left:106.5px;top:837.5px;width:3px;height:1.5px;background:#111"></div>
<div class="a" style="left:126px;top:837.5px;width:3px;height:1.5px;background:#111"></div>
<div class="a" style="left:152px;top:837.5px;width:3px;height:1.5px;background:#111"></div>
<div class="a" style="left:201.5px;top:837.5px;width:3px;height:1.5px;background:#111"></div>
</div>
<div id="rscroll" class="a"></div>
<svg style="left:1912px;top:196px" width="7" height="5"><path d="M0 5H7L3.5 0Z" fill="#c8c8c8"/></svg>
<div class="a" style="left:1912.5px;top:326px;width:5.5px;height:340px;border-radius:3px;background:#c1c1c1"></div>
<svg style="left:1912px;top:1024px" width="7" height="5"><path d="M0 0H7L3.5 5Z" fill="#c8c8c8"/></svg>
<!-- ============ TASKBAR ============ -->
<div id="task" class="a"></div>
<svg style="left:21px;top:1045px" width="23" height="23" viewBox="0 0 23 23"><defs><linearGradient id="wg" x1="0" y1="0" x2="1" y2="1"><stop offset="0" stop-color="#3fb8f5"/><stop offset="1" stop-color="#0a6fd6"/></linearGradient></defs><rect x="0" y="0" width="11" height="11" fill="url(#wg)"/><rect x="12" y="0" width="11" height="11" fill="url(#wg)"/><rect x="0" y="12" width="11" height="11" fill="url(#wg)"/><rect x="12" y="12" width="11" height="11" fill="url(#wg)"/></svg>
<div class="a" style="left:58px;top:1041px;width:218px;height:30px;border-radius:15px;background:#faf4f4;border:1px solid #e8d9db;border-bottom-color:#d5c4c6"></div>
<svg style="left:68px;top:1048px" width="16" height="17" viewBox="0 0 16 17"><circle cx="6.8" cy="6.8" r="5.5" fill="none" stroke="#222" stroke-width="1.7"/><path d="M10.8 11L14.5 15" stroke="#222" stroke-width="2" stroke-linecap="round"/></svg>
<div class="t" style="left:94px;top:1049.15px;font-size:13.5px;color:#4a4a4a">Cerca</div>
<svg style="left:289px;top:1045px" width="23" height="22" viewBox="0 0 23 22"><defs><linearGradient id="tv" x1="0" y1="0" x2="1" y2="1"><stop offset="0" stop-color="#fafafa"/><stop offset="1" stop-color="#9a9a9a"/></linearGradient></defs><rect x="7" y="0" width="16" height="15" fill="url(#tv)"/><rect x="0" y="7" width="16" height="15" fill="#1e1e1e"/><rect x="7" y="7" width="9" height="8" fill="#aaa"/></svg>
<svg style="left:332px;top:1045px" width="25" height="22" viewBox="0 0 25 22"><path d="M0 2A2 2 0 0 1 2 0H9L11 2.5H23A2 2 0 0 1 25 4.5V20A2 2 0 0 1 23 22H2A2 2 0 0 1 0 20Z" fill="#f5b823"/><rect x="0" y="4.5" width="25" height="17.5" rx="1.5" fill="#ffd85a"/><rect x="5" y="14" width="15" height="8" rx="2" fill="#1b6ed1"/></svg>
<div class="a" style="left:340px;top:1072px;width:7px;height:3px;border-radius:2px;background:#8a8a8a"></div>
<svg style="left:376.7px;top:1044px" width="24" height="24" viewBox="0 0 24 24"><defs><linearGradient id="eg1" x1="0" y1="0" x2="1" y2="0.6"><stop offset="0" stop-color="#29b6f0"/><stop offset="0.55" stop-color="#2fd0b8"/><stop offset="1" stop-color="#4fd84a"/></linearGradient><linearGradient id="eg2" x1="0" y1="0" x2="0.6" y2="1"><stop offset="0" stop-color="#1a8ae8"/><stop offset="1" stop-color="#0b4fb2"/></linearGradient></defs>
<circle cx="12" cy="12" r="11.7" fill="url(#eg1)"/>
<path d="M0.4 11Q2 6.5 7.5 6.3Q12 6.3 13.5 9.5Q11 10.5 11 13.5Q11 17.5 15.5 19.2Q19 20.3 22.8 18.2Q19 23.7 12 23.7A11.7 11.7 0 0 1 0.4 11Z" fill="url(#eg2)"/>
<path d="M13.5 9.5Q11 10.5 11 13.5Q11 17.5 15.5 19.2Q19 20.3 22.8 18.2L23.1 17.4Q19.5 18.6 16.6 17.4Q13.6 16 13.4 13.2Q13.4 11.8 14.4 11.2Z" fill="#f4e2e4"/>
<path d="M12 23.7Q19 23.7 22.8 18.2A11.7 11.7 0 0 1 12 23.7Z" fill="#f4e2e4"/></svg>
<svg style="left:420px;top:1046px" width="25" height="20" viewBox="0 0 25 20"><rect x="0" y="0" width="25" height="20" rx="1.5" fill="#3d9be9"/><rect x="1.5" y="1.5" width="22" height="17" fill="#bfe3fb"/><circle cx="8" cy="8.5" r="5" fill="#1b6ed1"/><path d="M8 3.5A5 5 0 0 1 13 8.5H8Z" fill="#f5a623"/><rect x="15" y="4" width="6" height="2" fill="#1b6ed1"/><rect x="15" y="9" width="6" height="2" fill="#1b6ed1"/><rect x="3" y="15" width="6" height="2" fill="#f5a623"/><rect x="11" y="15" width="10" height="2" fill="#1b6ed1"/></svg>
<svg style="left:468px;top:1044px" width="18" height="24" viewBox="0 0 18 24"><rect x="0" y="0" width="18" height="24" rx="1.5" fill="#4b5563"/><rect x="2" y="2" width="14" height="4.5" fill="#5fd3f3"/><g fill="#d8dde3"><rect x="2" y="8.5" width="3.8" height="3.5"/><rect x="7.1" y="8.5" width="3.8" height="3.5"/><rect x="12.2" y="8.5" width="3.8" height="3.5"/><rect x="2" y="13.5" width="3.8" height="3.5"/><rect x="7.1" y="13.5" width="3.8" height="3.5"/><rect x="2" y="18.5" width="3.8" height="3.5"/><rect x="7.1" y="18.5" width="3.8" height="3.5"/></g><rect x="12.2" y="13.5" width="3.8" height="8.5" fill="#1b4f9c"/></svg>
<svg style="left:509px;top:1044px" width="24" height="24" viewBox="0 0 24 24"><rect x="0" y="0" width="24" height="24" fill="#2a6fdb"/><path d="M7 1.5L21 13" stroke="#fff" stroke-width="1.6"/><rect x="1.5" y="15" width="21" height="1.8" fill="#fff"/><rect x="1.5" y="19" width="1.8" height="1.5" fill="#fff"/></svg>
<div class="a" style="left:546px;top:1037px;width:38px;height:38px;border-radius:5px;background:#f7eeef;border:1px solid #ecdfe1"></div>
<svg style="left:552px;top:1044px" width="26" height="26" viewBox="0 0 26 26"><circle cx="13" cy="13" r="12.5" fill="#db4437"/><path d="M13 13L1.9 19.3A12.5 12.5 0 0 0 19.2 23.9Z" fill="#0f9d58"/><path d="M13 13L19.2 23.9A12.5 12.5 0 0 0 24.5 7.5H13Z" fill="#f4b400"/><circle cx="13" cy="13" r="5.5" fill="#fff"/><circle cx="13" cy="13" r="4.3" fill="#4285f4"/></svg>
<svg style="left:566px;top:1039px" width="17" height="17" viewBox="0 0 20 20"><defs><clipPath id="av2"><circle cx="10" cy="10" r="10"/></clipPath></defs><g clip-path="url(#av2)"><rect width="20" height="20" fill="#ad3a30"/><path d="M4 3L9 3.5L9.5 9L15 9.5L18 14L17 20H3L1.5 14L4 12Z" fill="#eeb592"/><path d="M0 13Q4 12 6 16Q10 13 14 17Q18 14 20 15V20H0Z" fill="#e08e3c"/></g></svg>
<div class="a" style="left:557px;top:1072px;width:16px;height:3px;border-radius:2px;background:#2670d8"></div>
<svg style="left:1334px;top:1051px" width="24" height="16" viewBox="0 0 24 16"><defs><linearGradient id="mn" x1="0" y1="0" x2="0" y2="1"><stop offset="0" stop-color="#ffb03a"/><stop offset="1" stop-color="#f07a1a"/></linearGradient></defs><path d="M0.5 7Q3.5 15 11.5 14.5Q20 13.5 22.5 1Q17 9 9.5 9Q4 9 0.5 7Z" fill="url(#mn)"/></svg>
<div class="a" style="left:1344px;top:1038px;width:16px;height:16px;border-radius:50%;background:#c42b1c"></div>
<div class="t" style="left:1344px;top:1041.19px;width:16px;text-align:center;font-size:11px;color:#fff">1</div>
<div class="t" style="left:1364px;top:1041.84px;font-size:12px;color:#111">6°C</div>
<div class="t" style="left:1364px;top:1057.84px;font-size:12px;color:#5a5a5a">Sereno</div>
<svg style="left:1493px;top:1047px" width="17" height="17" viewBox="0 0 17 17"><path d="M8.5 1A7.3 7.3 0 0 0 2.2 12L1.2 15.8L5 14.8A7.3 7.3 0 1 0 8.5 1Z" fill="none" stroke="#25d366" stroke-width="1.5"/><path d="M5.8 5C5.5 6.5 6.5 9 8.5 10.8C10 12 11.5 12.3 12 11.8L11.5 10.3L10 9.8L9.3 10.3C8.5 9.8 7.5 8.8 7 7.8L7.5 7L7 5.3Z" fill="#25d366"/></svg>
<svg style="left:1526px;top:1048px" width="16" height="16" viewBox="0 0 16 16"><rect width="16" height="16" fill="#111"/><path d="M3 8C5 5 8 4.5 12 5.5V10.5C8 11.5 5 11 3 8Z" fill="none" stroke="#76b900" stroke-width="1.2"/><circle cx="8" cy="8" r="1.8" fill="none" stroke="#76b900" stroke-width="1"/></svg>
<svg style="left:1557px;top:1047px" width="17" height="17" viewBox="0 0 17 17"><circle cx="8.5" cy="8" r="7.8" fill="#1f9bb8"/><circle cx="8" cy="7.5" r="3.8" fill="none" stroke="#fff" stroke-width="1.6"/><path d="M10.5 10.5L13 14" stroke="#fff" stroke-width="1.6"/></svg>
<svg style="left:1589px;top:1048px" width="17" height="16" viewBox="0 0 17 16"><path d="M0.5 2.5L16.5 0.5L11 16Z" fill="#d81e2c"/><path d="M0.5 2.5L11 16L9 7Z" fill="#9e1020"/></svg>
<svg style="left:1622px;top:1048px" width="16" height="16" viewBox="0 0 16 16"><circle cx="8" cy="8" r="8" fill="#d9272e"/><path d="M4.3 11V5.2L8 9L11.7 5.2V11" fill="none" stroke="#fff" stroke-width="1.8" stroke-linejoin="round"/></svg>
<svg style="left:1654px;top:1048px" width="16" height="16" viewBox="0 0 16 16"><rect width="16" height="16" fill="#5ec43c"/><rect x="1" y="1" width="14" height="14" fill="none" stroke="#2d7d1c" stroke-width="1"/><path d="M3 5L8 3L13 5L8 7Z" fill="#fff"/><path d="M3 8L8 6L10 7" fill="none" stroke="#555" stroke-width="1"/><circle cx="11.5" cy="12" r="3.5" fill="#23a23e"/><path d="M9.8 12L11 13.2L13.3 10.8" fill="none" stroke="#fff" stroke-width="1.1"/></svg>
<svg style="left:1688px;top:1048px" width="12" height="16" viewBox="0 0 12 16"><ellipse cx="6" cy="8" rx="6" ry="8" fill="#1f7ae0"/><path d="M3.5 5L8.5 10.5L6 12.8V3.2L8.5 5.5L3.5 11" fill="none" stroke="#fff" stroke-width="1"/></svg>
<svg style="left:1719px;top:1048px" width="16" height="16" viewBox="0 0 16 16"><path d="M6.5 0.5L13 2.5V7.5C13 11 10 13.5 6.5 15C3 13.5 0 11 0 7.5V2.5Z" fill="#2b8fe6"/><circle cx="11" cy="11.5" r="4.5" fill="#15913c"/><path d="M9 11.5L10.5 13L13 10" fill="none" stroke="#fff" stroke-width="1.3"/></svg>
<svg style="left:1753px;top:1048px" width="14" height="16" viewBox="0 0 14 16"><g fill="none" stroke="#111" stroke-width="1.1"><rect x="2.5" y="0.5" width="5" height="4"/><path d="M1 4.5H9V15.5H1Z"/><path d="M8.5 14L10.5 15.5L13.5 11.5"/></g></svg>
<svg style="left:1782px;top:1048px" width="17" height="16" viewBox="0 0 17 16"><g fill="none" stroke="#111" stroke-width="1.1"><path d="M11 11.5H0.5V1.5H11"/><path d="M5.5 11.5V14.5M3 14.5H8.5"/><rect x="12" y="0.5" width="4" height="5" rx="1"/><path d="M14 5.5V15"/></g></svg>
<svg style="left:1806px;top:1049px" width="17" height="14" viewBox="0 0 17 14"><g fill="none" stroke="#111" stroke-width="1.1"><path d="M0.5 4.5H3.5L7.5 1V13L3.5 9.5H0.5Z"/><path d="M10 4.5A3 3 0 0 1 10 9.5"/><path d="M12.2 2.5A6 6 0 0 1 12.2 11.5"/><path d="M14.5 0.8A8.5 8.5 0 0 1 14.5 13.2"/></g></svg>
<div class="t" style="left:1800px;width:101px;text-align:right;top:1041.84px;font-size:12px;color:#1a1a1a">19:28</div>
<div class="t" style="left:1800px;width:101px;text-align:right;top:1057.34px;font-size:12px;color:#1a1a1a">26/11/2025</div>
</body></html>
